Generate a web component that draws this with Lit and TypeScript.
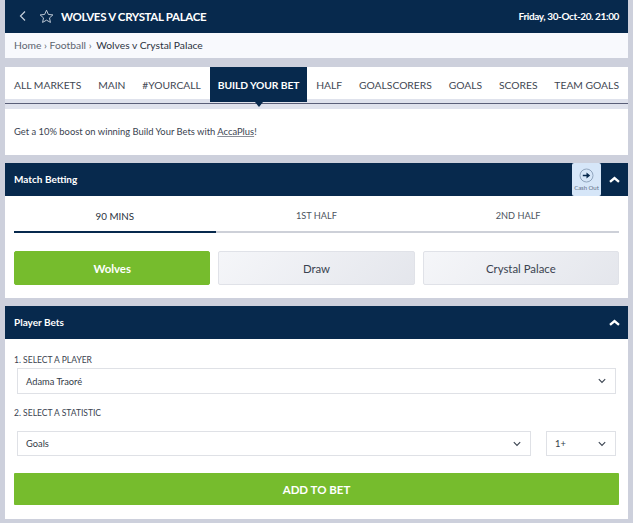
import { LitElement, html, css } from 'lit';
import { customElement } from 'lit/decorators.js';

const chevron = html`<svg class="chev" width="8" height="6" viewBox="0 0 8 6"><path d="M.8 1.200L4 4.400l3.200-3.200" fill="none" stroke="#3a4350" stroke-width="1.100"/></svg>`;
const collapse = html`<svg width="13" height="9" viewBox="0 0 13 9"><path d="M2 6.800l4.500-3.800L11 6.800" fill="none" stroke="#fff" stroke-width="2.400"/></svg>`;

@customElement('app-root')
export class AppRoot extends LitElement {
  static styles = css`
    :host {
      display: block;
      height: 523px;
      overflow: hidden;
      background: #cdd0dc;
      font-family: Lato, "Open Sans", sans-serif;
      color: #3a4350;
      padding: 0 5px;
      box-sizing: border-box;
    }
    .top {
      height: 33px;
      background: #07294d;
      display: flex;
      align-items: center;
      color: #fff;
      padding: 0 9px 1px 14px;
      box-sizing: border-box;
    }
    .top .title { font-size: 11.5px; font-weight: 700; letter-spacing: -0.33px; margin-left: 7px; white-space: nowrap; }
    .top .star { margin-left: 12px; }
    .top .date { margin-left: auto; font-size: 10px; font-weight: 700; letter-spacing: -0.38px; }
    .crumbs {
      height: 25px;
      background: #f8f9fd;
      display: flex;
      align-items: center;
      padding: 0 9px 1px;
      box-sizing: border-box;
      font-size: 10.3px;
      color: #5d6570;
      white-space: pre;
    }
    .crumbs b { font-weight: 400; color: #2b3340; margin-left: 2px; }
    .tabs {
      margin-top: 9px;
      height: 36px;
      background: linear-gradient(#fff 0 32px, #dfe2ec 32px);
      border-bottom: 1px solid #5a5f78;
      display: flex;
      justify-content: space-between;
      padding: 0 9px;
      font-size: 10.3px;
      position: relative;
    }
    .tab { height: 36px; padding-bottom: 1px; box-sizing: border-box; display: flex; align-items: center; white-space: nowrap; color: #3f4753; }
    .tab.active {
      background: #07294d;
      color: #fff;
      font-weight: 700;
      letter-spacing: -0.1px;
      height: 35px;
      padding: 0 8px;
      margin: 0 -8px;
      position: relative;
    }
    .tab.active::after {
      content: '';
      position: absolute;
      left: 50%;
      bottom: -5px;
      margin-left: -4px;
      border: 4px solid transparent;
      border-bottom: 0;
      border-top: 5px solid #07294d;
    }
    .strip { height: 5px; background: #dfe2ec; }
    .promo {
      height: 46px;
      background: #fff;
      display: flex;
      align-items: center;
      padding: 0 9px 2px;
      box-sizing: border-box;
      font-size: 9.4px;
      color: #3a4350;
    }
    .promo u { text-decoration-color: #8a8f99; }
    .bar {
      height: 33px;
      background: #07294d;
      color: #fff;
      display: flex;
      align-items: center;
      padding: 0 6px 1px 9px;
      box-sizing: border-box;
      font-size: 10px;
      font-weight: 700;
      margin-top: 8px;
    }
    .bar .fold { margin-left: auto; display: flex; width: 14px; }
    .cash {
      margin-left: auto;
      width: 29px;
      height: 33px;
      margin-bottom: -1px;
      background: #d6e6f8;
      border-radius: 2px;
      display: flex;
      flex-direction: column;
      align-items: center;
      justify-content: center;
      color: #5d6f88;
      font-size: 6px;
      font-weight: 400;
      gap: 1px;
    }
    .cash + .fold { margin-left: 7px; }
    .panel { background: #fff; padding: 0 9px; }
    .periods {
      display: grid;
      grid-template-columns: repeat(3, 1fr);
      font-size: 9.2px;
      text-align: center;
      padding-top: 14px;
      color: #4c5460;
    }
    .period { height: 21px; border-bottom: 2px solid #cdd0d8; }
    .period.active { border-bottom-color: #07294d; color: #2b3340; font-size: 9.8px; }
    .picks {
      display: grid;
      grid-template-columns: repeat(3, 1fr);
      gap: 8px;
      padding: 18px 0 13px;
    }
    .pick {
      height: 34px;
      border-radius: 2px;
      display: flex;
      align-items: center;
      justify-content: center;
      font-size: 11.4px;
      color: #3a4350;
      background: linear-gradient(135deg, #f5f6f9, #e4e6ec);
      border: 1px solid #e0e2e8;
      box-sizing: border-box;
    }
    .pick.on { background: #76bc2d; border-color: #76bc2d; color: #fff; font-weight: 700; }
    .label { font-size: 8.5px; color: #3a4350; }
    .field {
      height: 26px;
      border: 1px solid #dfe1e6;
      background: #fff;
      box-sizing: border-box;
      display: flex;
      align-items: center;
      justify-content: space-between;
      padding: 0 9px 0 8px;
      font-size: 9.3px;
      color: #333b47;
      flex: 1;
    }
    .player { height: 180px; box-sizing: border-box; padding-top: 15px; }
    .player .label { line-height: 12px; }
    .row { display: flex; gap: 15px; margin: 2px 3px 0; }
    .qty { flex: 0 0 70px; }
    .second { margin-top: 13px; }
    .row.stat { margin-top: 12px; }
    .row.stat .field { height: 25px; }
    .add {
      margin-top: 17px;
      height: 32px;
      background: #76bc2d;
      color: #fff;
      font-size: 11.5px;
      font-weight: 700;
      display: flex;
      align-items: center;
      justify-content: center;
      border-radius: 1px;
    }
    .chev { flex: none; }
  `;

  render() {
    return html`
      <div class="top">
        <svg width="8" height="12" viewBox="0 0 8 12"><path d="M6 1.500L1.500 6 6 10.500" fill="none" stroke="#c6d0dc" stroke-width="1.200"/></svg>
        <svg class="star" width="15" height="15" viewBox="0 0 16 16"><path d="M8 1.300l2 4.500 4.800.5-3.600 3.200 1 4.800L8 11.900l-4.200 2.400 1-4.800L1.200 6.300 6 5.800z" fill="none" stroke="#c6d0dc" stroke-width="1"/></svg>
        <span class="title">WOLVES V CRYSTAL PALACE</span>
        <span class="date">Friday, 30-Oct-20. 21:00</span>
      </div>
      <div class="crumbs">Home › Football › <b>Wolves v Crystal Palace</b></div>
      <div class="tabs">
        ${['ALL MARKETS', 'MAIN', '#YOURCALL'].map((t) => html`<div class="tab">${t}</div>`)}
        <div class="tab active">BUILD YOUR BET</div>
        ${['HALF', 'GOALSCORERS', 'GOALS', 'SCORES', 'TEAM GOALS'].map((t) => html`<div class="tab">${t}</div>`)}
      </div>
      <div class="strip"></div>
      <div class="promo"><span>Get a 10% boost on winning Build Your Bets with <u>AccaPlus</u>!</span></div>

      <div class="bar">
        Match Betting
        <div class="cash">
          <svg width="15" height="15" viewBox="0 0 15 15"><circle cx="7.500" cy="7.500" r="6.500" fill="none" stroke="#7d93ad" stroke-width=".8"/><path d="M3.800 6.700h3.700V4.500l3.700 3-3.700 3V8.300H3.800z" fill="#07294d"/></svg>
          <span>Cash Out</span>
        </div>
        <span class="fold">${collapse}</span>
      </div>
      <div class="panel">
        <div class="periods">
          <div class="period active">90 MINS</div>
          <div class="period">1ST HALF</div>
          <div class="period">2ND HALF</div>
        </div>
        <div class="picks">
          <div class="pick on">Wolves</div>
          <div class="pick">Draw</div>
          <div class="pick">Crystal Palace</div>
        </div>
      </div>

      <div class="bar">Player Bets <span class="fold">${collapse}</span></div>
      <div class="panel player">
        <div class="label">1. SELECT A PLAYER</div>
        <div class="row"><div class="field">Adama Traoré ${chevron}</div></div>
        <div class="label second">2. SELECT A STATISTIC</div>
        <div class="row stat">
          <div class="field">Goals ${chevron}</div>
          <div class="field qty">1+ ${chevron}</div>
        </div>
        <div class="add">ADD TO BET</div>
      </div>
    `;
  }
}
